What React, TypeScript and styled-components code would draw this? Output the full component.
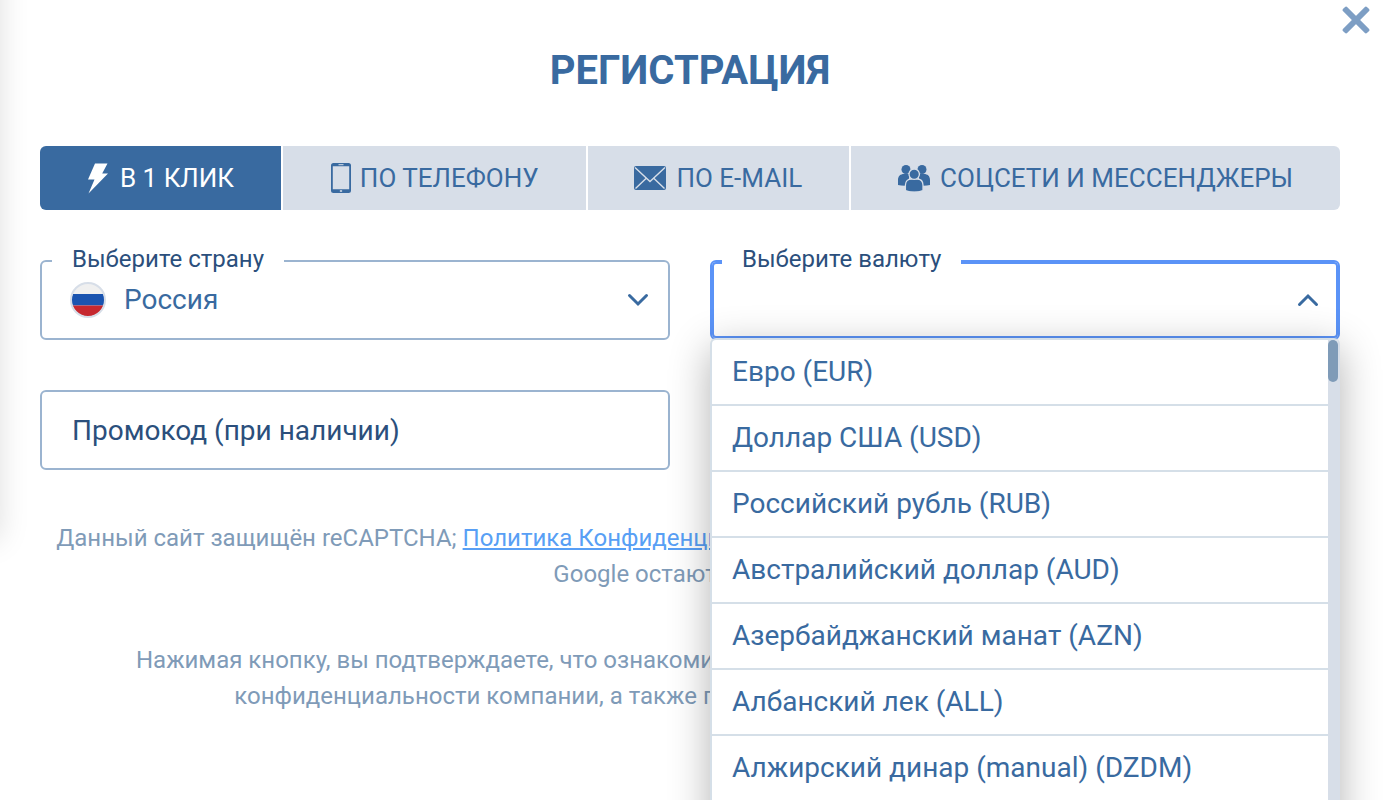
import React, { useState } from "react";
import styled, { createGlobalStyle, css } from "styled-components";

const GlobalStyle = createGlobalStyle`
  *, *::before, *::after { box-sizing: border-box; }
  body { margin: 0; background: #fff; }
  body, button, input, select { font-family: Roboto, "Liberation Sans", sans-serif; }
`;

const Dialog = styled.main`
  position: relative;
  height: 100vh;
  padding: 46px 48px 0 40px;
  overflow: hidden;
  background: #fff;
`;

const SideShadow = styled.div`
  position: absolute;
  left: -40px;
  top: -40px;
  width: 40px;
  height: 580px;
  box-shadow: 0 0 30px rgba(0, 0, 0, 0.13);
`;

const CloseButton = styled.button`
  position: absolute;
  top: 6px;
  right: 18px;
  display: flex;
  padding: 0;
  border: 0;
  background: none;
  cursor: pointer;
`;

const Title = styled.h1`
  margin: 0 0 50px;
  color: #396aa0;
  font-size: 40px;
  font-weight: 700;
  line-height: 50px;
  text-align: center;
`;

const Tabs = styled.div`
  display: flex;
  gap: 2px;
  border-radius: 6px;
  overflow: hidden;
`;

const Tab = styled.button<{ $active?: boolean }>`
  display: flex;
  flex: 1 1 auto;
  align-items: center;
  justify-content: center;
  gap: 8px;
  height: 64px;
  padding: 0 40px;
  border: 0;
  background: ${(p) => (p.$active ? "#396aa0" : "#d7dee8")};
  color: ${(p) => (p.$active ? "#fff" : "#396aa0")};
  font-size: 26px;
  line-height: 32px;
  white-space: nowrap;
  cursor: pointer;
`;

const Fields = styled.div`
  display: grid;
  grid-template-columns: 1fr 1fr;
  gap: 50px 40px;
  margin-top: 50px;
`;

const Field = styled.div<{ $open?: boolean }>`
  position: relative;
  display: flex;
  align-items: center;
  gap: 18px;
  height: 80px;
  padding: 0 18px 0 28px;
  border: 2px solid #9bb4d0;
  border-radius: 6px;
  ${(p) =>
    p.$open &&
    css`
      border-color: #5b93f7;
      box-shadow: inset 0 0 0 2px #5b93f7;
    `}
`;

const FieldLabel = styled.label`
  position: absolute;
  top: -19px;
  left: 10px;
  padding: 0 20px;
  background: #fff;
  color: #2b4f7c;
  font-size: 24px;
  line-height: 32px;
`;

const Select = styled.select`
  flex: 1;
  min-width: 0;
  height: 60px;
  padding: 0 0 2px;
  border: 0;
  outline: 0;
  appearance: none;
  background: transparent;
  color: #396aa0;
  font-size: 28px;
`;

const PromoInput = styled.input`
  height: 80px;
  min-width: 0;
  padding: 0 30px;
  border: 2px solid #9bb4d0;
  border-radius: 6px;
  color: #396aa0;
  font-size: 28px;
  &::placeholder { color: #2b4f7c; opacity: 1; }
`;

const Menu = styled.div`
  position: absolute;
  z-index: 2;
  top: 76px;
  left: -2px;
  right: -2px;
  display: flex;
  height: 640px;
  border: 2px solid #d5dfe8;
  border-right-color: #d7dee8;
  border-radius: 6px;
  background: #fff;
  box-shadow: 0 10px 40px rgba(0, 0, 0, 0.3);
  overflow: hidden;
`;

const OptionList = styled.ul`
  flex: 1;
  margin: 0;
  padding: 0;
  overflow: hidden;
  list-style: none;
`;

const Option = styled.li`
  height: 66px;
  padding: 0 20px;
  border-bottom: 2px solid #d5dfe8;
  color: #396aa0;
  font-size: 28px;
  line-height: 64px;
  white-space: nowrap;
  cursor: pointer;
`;

const ScrollTrack = styled.div`
  flex: none;
  width: 10px;
  background: #d7dee8;
`;

const ScrollThumb = styled.div`
  height: 42px;
  border-radius: 5px;
  background: #7f9bb8;
`;

const Note = styled.p`
  margin: 50px 0 0;
  color: #7f9bb8;
  font-size: 24px;
  line-height: 36px;
  text-align: center;
  white-space: nowrap;
  a { color: #589ff5; }
`;

const BoltIcon = () => (
  <svg width="25" height="32" viewBox="0 0 25 32" fill="currentColor" aria-hidden="true">
    <path d="M8 1.500H20.500L15.200 11.500H21L1.500 31.500L7.500 17.500H1Z" />
  </svg>
);

const PhoneIcon = () => (
  <svg width="22" height="32" viewBox="0 0 22 32" aria-hidden="true">
    <path
      fill="currentColor"
      fillRule="evenodd"
      d="M3.500 1h15a2.500 2.500 0 0 1 2.500 2.500v25a2.500 2.500 0 0 1-2.500 2.500h-15A2.500 2.500 0 0 1 1 28.500v-25A2.500 2.500 0 0 1 3.500 1ZM2.800 4.300v22.900h16.400v-22.900Z"
    />
    <path d="M8.500 2.700h5M9.800 29h2.400M11 28v2" stroke="#d7dee8" strokeWidth="1" />
  </svg>
);

const MailIcon = () => (
  <svg width="34" height="24" viewBox="0 0 34 24" aria-hidden="true">
    <rect width="32" height="24" rx="2" fill="currentColor" />
    <path d="M1 1.500L16 15.500L31 1.500M1.500 22.500L12 12.500M30.500 22.500L20 12.500" fill="none" stroke="#d7dee8" strokeWidth="1.400" />
  </svg>
);

const GroupIcon = () => (
  <svg width="34" height="28" viewBox="0 0 34 28" fill="currentColor" aria-hidden="true">
    <circle cx="8" cy="5.500" r="4.500" />
    <circle cx="24" cy="5.500" r="4.500" />
    <path d="M0 21v-5c0-4 2.500-6 6-6h5v11.500c-4 .5-8 .3-11-.5ZM32 21v-5c0-4-2.500-6-6-6h-5v11.500c4 .5 8 .3 11-.5Z" />
    <g stroke="#d7dee8" strokeWidth="1.300">
      <path d="M7.400 26.500v-5.200c0-4 2.300-6.300 6-6.300h5.600c3.700 0 6 2.300 6 6.300v5.200c-5 1.800-12.600 1.800-17.600 0Z" />
      <circle cx="16.200" cy="10.200" r="5.200" />
    </g>
  </svg>
);

const FlagIcon = () => (
  <svg width="36" height="36" viewBox="0 0 36 36" aria-hidden="true">
    <clipPath id="flag-circle">
      <circle cx="18" cy="18" r="16.500" />
    </clipPath>
    <g clipPath="url(#flag-circle)">
      <path fill="#f0f0f0" d="M0 0h36v12H0z" />
      <path fill="#1a54b0" d="M0 12h36v11.500H0z" />
      <path fill="#c6282f" d="M0 23.500h36V36H0z" />
    </g>
    <circle cx="18" cy="18" r="17" fill="none" stroke="#d7dee8" strokeWidth="2" />
  </svg>
);

const Chevron = ({ up }: { up?: boolean }) => (
  <svg width="24" height="14" viewBox="0 0 24 14" fill="none" stroke="#396aa0" strokeWidth="3" strokeLinecap="round" aria-hidden="true">
    <path d={up ? "M3.500 11.500L12 3L20.500 11.500" : "M3.500 2.500L12 11L20.500 2.500"} />
  </svg>
);

const CloseIcon = () => (
  <svg width="28" height="28" viewBox="0 0 28 28" fill="#7d9ec4" aria-hidden="true">
    <rect x="-3" y="11" width="34" height="6" rx="1.800" transform="rotate(45 14 14)" />
    <rect x="-3" y="11" width="34" height="6" rx="1.800" transform="rotate(-45 14 14)" />
  </svg>
);

const tabs = [
  { label: "В 1 КЛИК", icon: <BoltIcon /> },
  { label: "ПО ТЕЛЕФОНУ", icon: <PhoneIcon /> },
  { label: "ПО E-MAIL", icon: <MailIcon /> },
  { label: "СОЦСЕТИ И МЕССЕНДЖЕРЫ", icon: <GroupIcon /> },
];

const currencies = [
  "Евро (EUR)",
  "Доллар США (USD)",
  "Российский рубль (RUB)",
  "Австралийский доллар (AUD)",
  "Азербайджанский манат (AZN)",
  "Албанский лек (ALL)",
  "Алжирский динар (manual) (DZDM)",
];

export default function App() {
  const [active, setActive] = useState(0);
  return (
    <>
      <GlobalStyle />
      <Dialog>
        <SideShadow />
        <CloseButton type="button" aria-label="Закрыть">
          <CloseIcon />
        </CloseButton>
        <Title>РЕГИСТРАЦИЯ</Title>
        <Tabs role="tablist">
          {tabs.map((tab, i) => (
            <Tab
              key={tab.label}
              type="button"
              role="tab"
              aria-selected={i === active}
              $active={i === active}
              onClick={() => setActive(i)}
            >
              {tab.icon}
              {tab.label}
            </Tab>
          ))}
        </Tabs>
        <Fields>
          <Field>
            <FieldLabel htmlFor="country">Выберите страну</FieldLabel>
            <FlagIcon />
            <Select id="country">
              <option>Россия</option>
            </Select>
            <Chevron />
          </Field>
          <Field $open>
            <FieldLabel htmlFor="currency">Выберите валюту</FieldLabel>
            <Select id="currency" defaultValue="">
              <option value="" />
            </Select>
            <Chevron up />
            <Menu>
              <OptionList role="listbox" aria-label="Выберите валюту">
                {currencies.map((name) => (
                  <Option key={name} role="option" aria-selected={false}>
                    {name}
                  </Option>
                ))}
              </OptionList>
              <ScrollTrack>
                <ScrollThumb />
              </ScrollTrack>
            </Menu>
          </Field>
          <PromoInput aria-label="Промокод" placeholder="Промокод (при наличии)" />
        </Fields>
        <Note>
          Данный сайт защищён reCAPTCHA; <a href="#privacy">Политика Конфиденциальности</a> и{" "}
          <a href="#terms">Условия предоставления услуг</a> компании
          <br />
          Google остаются в силе.
        </Note>
        <Note>
          Нажимая кнопку, вы подтверждаете, что ознакомились с нормами сайта и согласны с политикой
          <br />
          конфиденциальности компании, а также подтверждаете своё совершеннолетие
        </Note>
      </Dialog>
    </>
  );
}
